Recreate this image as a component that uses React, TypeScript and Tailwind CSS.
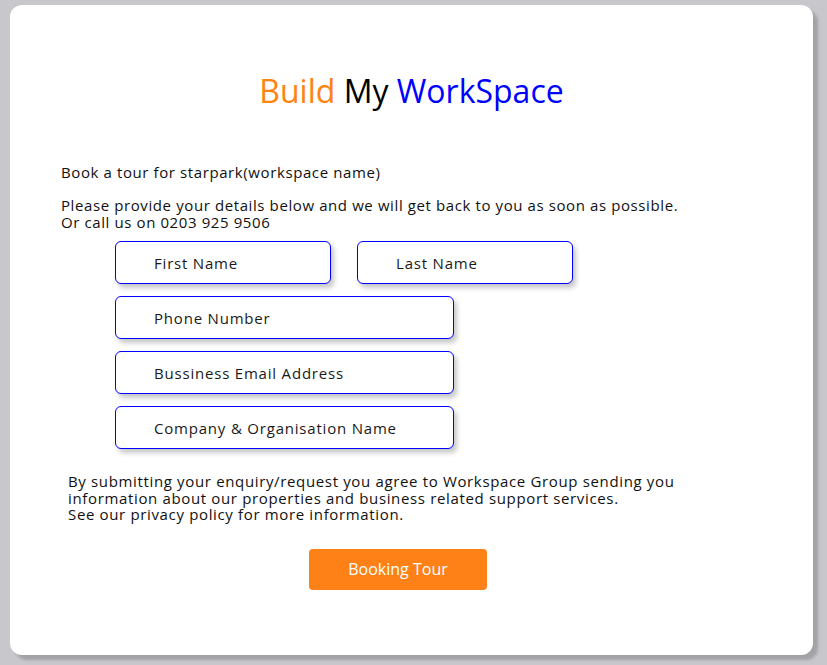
import React from 'react';

const font = { fontFamily: '"Open Sans", "Liberation Sans", sans-serif' };

const Field: React.FC<{ placeholder: string; width: string }> = ({ placeholder, width }) => (
	<input
		type="text"
		placeholder={placeholder}
		className={`${width} h-[43px] rounded-[6px] border-[1.5px] border-[#0000ff] bg-white pl-[38px] text-[15px] tracking-[0.8px] text-black placeholder:text-[#1a1a1a] shadow-[3px_4px_5px_rgba(0,0,0,0.22)] outline-none`}
	/>
);

const App: React.FC = () => {
	return (
		<div className="min-h-[665px] w-full bg-[#c8c8cc] pt-[5px] pl-[10px]" style={font}>
			<div className="flex h-[650px] w-[803px] flex-col rounded-[12px] bg-white pt-[66px] shadow-[5px_5px_3px_#a3a3a7]">
				<h1 className="text-center text-[32px] leading-[40px] text-black">
					<span className="text-[#ff8311]">Build</span> My <span className="text-[#0000ff]">WorkSpace</span>
				</h1>

				<p className="mt-[53px] ml-[51px] text-[15px] leading-[16.5px] tracking-[0.6px] text-[#111]">
					Book a tour for starpark(workspace name)
					<br />
					<br />
					Please provide your details below and we will get back to you as soon as possible.
					<br />
					Or call us on 0203 925 9506
				</p>

				<form className="mt-[11px] ml-[105px] flex flex-col gap-[12px]">
					<div className="flex gap-[26px]">
						<Field placeholder="First Name" width="w-[216px]" />
						<Field placeholder="Last Name" width="w-[216px]" />
					</div>
					<Field placeholder="Phone Number" width="w-[339px]" />
					<Field placeholder="Bussiness Email Address" width="w-[339px]" />
					<Field placeholder="Company & Organisation Name" width="w-[339px]" />
				</form>

				<p className="mt-[24px] ml-[58px] text-[15px] leading-[16.5px] tracking-[0.65px] text-[#111]">
					By submitting your enquiry/request you agree to Workspace Group sending you
					<br />
					information about our properties and business related support services.
					<br />
					See our privacy policy for more information.
				</p>

				<button
					type="button"
					className="mt-[26px] ml-[299px] h-[41px] w-[178px] rounded-[4px] bg-[#fd8117] text-[16px] text-white"
				>
					Booking Tour
				</button>
			</div>
		</div>
	);
};

export default App;
